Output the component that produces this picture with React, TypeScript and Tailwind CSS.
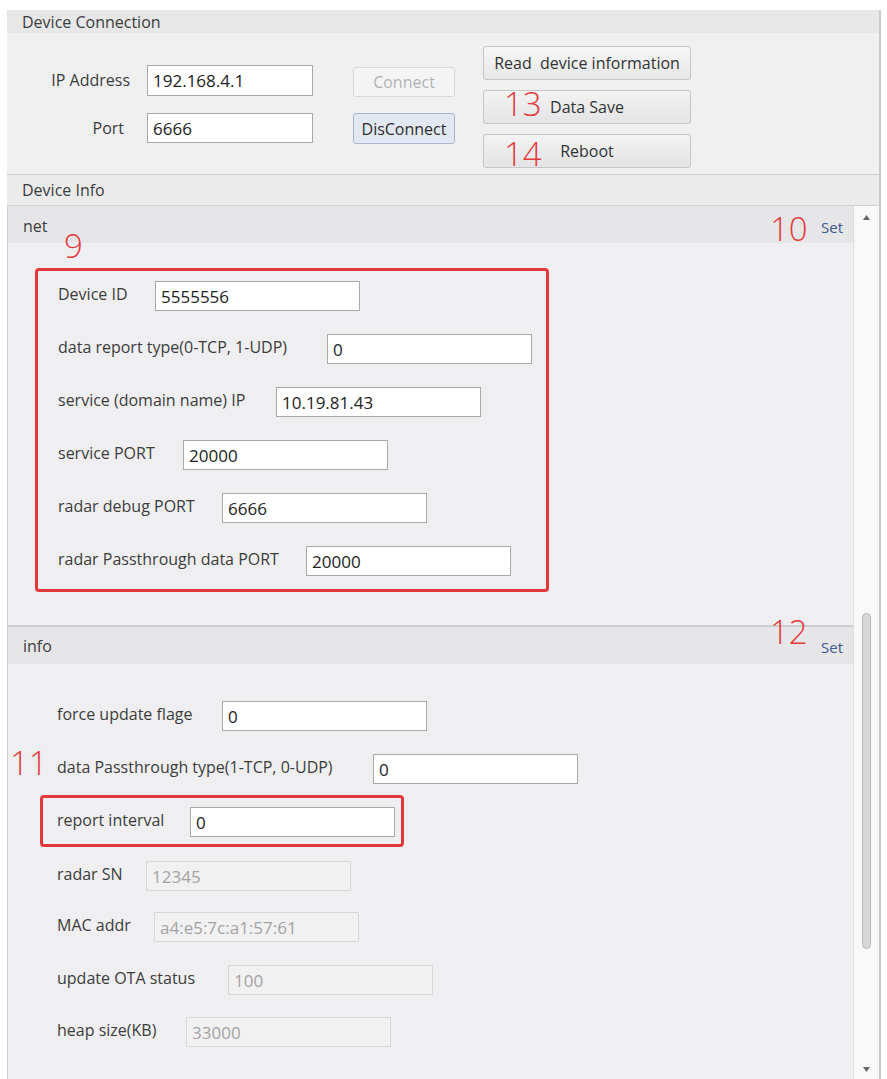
import React from "react";

type Row = { label: string; value: string; lw: string; disabled?: boolean; mt?: string };

const netRows: Row[] = [
  { label: "Device ID", value: "5555556", lw: "w-[97px]" },
  { label: "data report type(0-TCP, 1-UDP)", value: "0", lw: "w-[269px]" },
  { label: "service (domain name) IP", value: "10.19.81.43", lw: "w-[218px]" },
  { label: "service PORT", value: "20000", lw: "w-[125px]" },
  { label: "radar debug PORT", value: "6666", lw: "w-[164px]" },
  { label: "radar Passthrough data PORT", value: "20000", lw: "w-[248px]" },
];

const readOnlyRows: Row[] = [
  { label: "radar SN", value: "12345", lw: "w-[89px]", disabled: true, mt: "mt-[14px]" },
  { label: "MAC addr", value: "a4:e5:7c:a1:57:61", lw: "w-[97px]", disabled: true, mt: "mt-[21px]" },
  { label: "update OTA status", value: "100", lw: "w-[171px]", disabled: true, mt: "mt-[23px]" },
  { label: "heap size(KB)", value: "33000", lw: "w-[129px]", disabled: true, mt: "mt-[22px]" },
];

const mark = "absolute font-light text-[33px] leading-none text-[#e43a3c] pointer-events-none";

function Field({ value, disabled, w = "w-[205px]", h = "h-[30px]" }: { value: string; disabled?: boolean; w?: string; h?: string }) {
  return (
    <input
      readOnly
      value={value}
      className={`${w} ${h} shrink-0 border px-[5px] text-[17px] outline-none ${
        disabled ? "border-[#d8d8d8] bg-[#f1f1f2] text-[#a3a3a3]" : "border-[#a8a8a8] bg-white text-[#222]"
      }`}
    />
  );
}

function FormRow({ row, children }: { row: Row; children?: React.ReactNode }) {
  return (
    <div className={`relative flex h-[30px] items-center ${row.mt ?? ""}`}>
      {children}
      <span className={`${row.lw} mb-[5px] shrink-0 whitespace-nowrap`}>{row.label}</span>
      <Field value={row.value} disabled={row.disabled} />
    </div>
  );
}

export default function App() {
  return (
    <div className="min-h-screen bg-white pt-[10px] font-['Open_Sans',sans-serif] text-[16px] text-[#3c3c3c]">
      <div className="ml-[7px] w-[874px] border-r-2 border-[#c9c9c9]">
        {/* Device Connection */}
        <div className="flex h-[23px] items-center bg-[#e7e7e8] pl-[15px]">Device Connection</div>
        <div className="flex h-[142px] border-b border-[#cfcfcf] bg-[#f0f0f1]">
          <div className="grid grid-cols-[123px_166px] items-center gap-x-[17px] gap-y-[17px] self-start pt-[32px]">
            <span className="mb-[1px] text-right">IP Address</span>
            <Field value="192.168.4.1" w="w-[166px]" h="h-[31px]" />
            <span className="mb-[1px] pr-[6px] text-right">Port</span>
            <Field value="6666" w="w-[166px]" />
          </div>

          <div className="ml-[40px] flex flex-col gap-[16px] pt-[34px]">
            <button className="flex h-[30px] w-[102px] items-center justify-center rounded-[3px] border border-[#d9d9d9] bg-[#f4f4f5] text-[#b3b3b3]">
              Connect
            </button>
            <button className="flex h-[31px] w-[102px] items-center justify-center rounded-[3px] border border-[#a9b6cc] bg-[#e3e9f3] text-[#2d2d2d]">
              DisConnect
            </button>
          </div>

          <div className="ml-[28px] flex flex-col gap-[10px] pt-[13px]">
            <button className="flex h-[34px] w-[208px] items-center justify-center whitespace-pre rounded-[3px] border border-[#c6c6c6] bg-linear-to-b from-[#f7f7f7] to-[#e7e7e8] text-[#333]">
              Read  device information
            </button>
            <button className="relative flex h-[34px] w-[208px] items-center justify-center rounded-[3px] border border-[#c6c6c6] bg-linear-to-b from-[#f3f3f4] to-[#e4e4e6] text-[#333]">
              <span className={`${mark} left-[20px] top-[-4px]`}>13</span>
              Data Save
            </button>
            <button className="relative flex h-[34px] w-[208px] items-center justify-center rounded-[3px] border border-[#c6c6c6] bg-linear-to-b from-[#f3f3f4] to-[#e4e4e6] text-[#333]">
              <span className={`${mark} left-[20px] top-[2px]`}>14</span>
              Reboot
            </button>
          </div>
        </div>

        {/* Device Info */}
        <div className="flex h-[30px] items-center bg-[#ebebec] pl-[15px]">Device Info</div>

        <div className="flex h-[874px] border-t border-[#d2d2d4]">
          <div className="w-[846px] shrink-0 overflow-hidden border-l border-[#d0d0d2] bg-[#efeff1]">
            {/* net */}
            <div className="relative flex h-[37px] items-center justify-between bg-[#e6e6e8] pl-[15px] pr-[10px]">
              <span className="pt-[2px]">net</span>
              <span className={`${mark} left-[762px] top-[6px]`}>10</span>
              <span className="pt-[6px] text-[15px] text-[#3f5a8c]">Set</span>
            </div>
            <div className="relative h-[384px] border-b-2 border-[#cdcdd0] pl-[27px] pt-[25px]">
              <span className={`${mark} left-[56px] top-[-14px]`}>9</span>
              <div className="flex w-[514px] flex-col gap-[23px] rounded-[4px] border-[3px] border-[#e4383a] pb-[13px] pl-[20px] pt-[10px]">
                {netRows.map((r) => (
                  <FormRow key={r.label} row={r} />
                ))}
              </div>
            </div>

            {/* info */}
            <div className="relative flex h-[37px] items-center justify-between bg-[#e6e6e8] pl-[15px] pr-[10px]">
              <span>info</span>
              <span className={`${mark} left-[762px] top-[-12px]`}>12</span>
              <span className="pt-[3px] text-[15px] text-[#3f5a8c]">Set</span>
            </div>
            <div className="pl-[32px] pt-[37px]">
              <div className="pl-[17px]">
                <FormRow row={{ label: "force update flage", value: "0", lw: "w-[165px]" }} />
                <FormRow row={{ label: "data Passthrough type(1-TCP, 0-UDP)", value: "0", lw: "w-[316px]", mt: "mt-[23px]" }}>
                  <span className={`${mark} left-[-47px] top-[-8px]`}>11</span>
                </FormRow>
              </div>
              <div className="mt-[11px] w-[364px] rounded-[4px] border-[3px] border-[#e4383a] pb-[7px] pl-[14px] pt-[9px]">
                <FormRow row={{ label: "report interval", value: "0", lw: "w-[133px]" }} />
              </div>
              <div className="pl-[17px]">
                {readOnlyRows.map((r) => (
                  <FormRow key={r.label} row={r} />
                ))}
              </div>
            </div>
          </div>

          {/* scrollbar */}
          <div className="flex w-[26px] shrink-0 flex-col items-center border-l border-[#dedee0] bg-[#f8f8f9]">
            <svg className="mt-[9px]" width="7" height="5" viewBox="0 0 7 5">
              <path d="M0 5 L3.5 0 L7 5 Z" fill="#666" />
            </svg>
            <div className="mt-[393px] h-[336px] w-[9px] rounded-full border border-[#b9b9bb] bg-[#d7d7d9]" />
            <div className="flex-1" />
            <svg className="mb-[7px]" width="7" height="5" viewBox="0 0 7 5">
              <path d="M0 0 L7 0 L3.5 5 Z" fill="#666" />
            </svg>
          </div>
        </div>
      </div>
    </div>
  );
}
